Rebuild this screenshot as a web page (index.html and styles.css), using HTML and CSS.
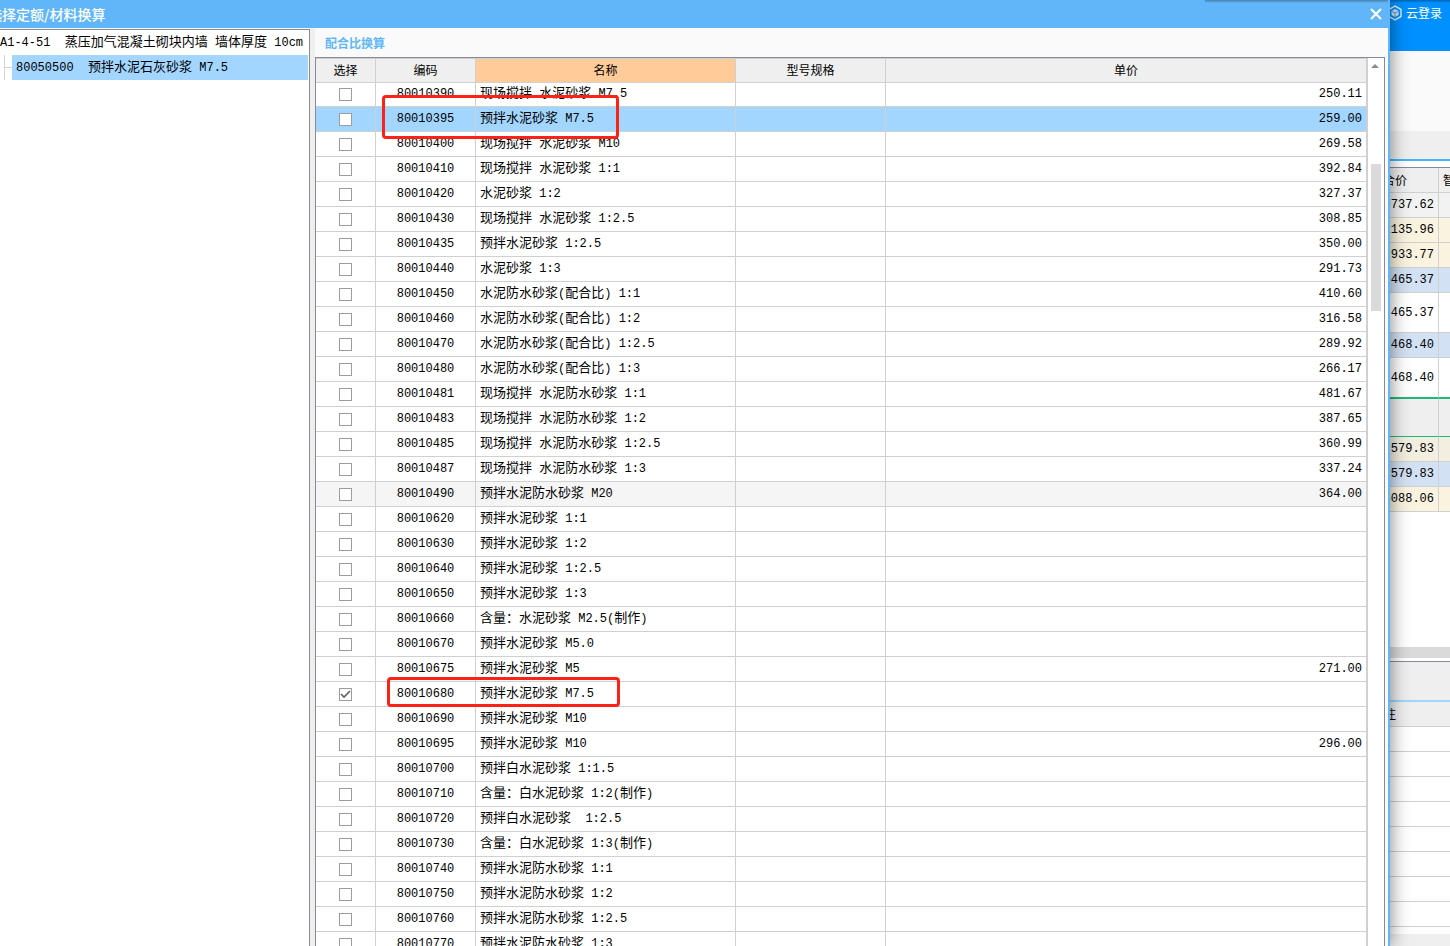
FILE: index.html
```html
<!DOCTYPE html>
<html lang="zh-CN">
<head>
<meta charset="utf-8">
<title>选择定额/材料换算</title>
<link rel="stylesheet" href="styles.css">
</head>
<body>
<div class="screen">
  <section class="dialog">
    <header class="titlebar">
      <h1 class="title">选择定额/材料换算</h1>
      <button class="close" type="button" aria-label="关闭"><svg width="12" height="12" viewBox="0 0 12 12"><path d="M1 1L11 11M11 1L1 11" stroke="#fff" stroke-width="2" fill="none"/></svg></button>
    </header>
    <div class="content">
      <nav class="tree">
        <a class="node" href="#q"><span>A1-4-51&nbsp; </span><span class="zh">蒸压加气混凝土砌块内墙</span> <span class="zh">墙体厚度</span><span> 10cm</span></a>
        <div class="branch"><a class="node selected" href="#m"><span>80050500&nbsp; </span><span class="zh">预拌水泥石灰砂浆</span><span> M7.5</span></a></div>
      </nav>
      <div class="panel">
        <h2 class="tab">配合比换算</h2>
        <div class="grid">
          <div class="rows">
            <table class="mix">
              <colgroup><col class="c-pick"><col class="c-code"><col class="c-name"><col class="c-spec"><col></colgroup>
              <thead><tr><th>选择</th><th>编码</th><th class="sorted">名称</th><th>型号规格</th><th>单价</th></tr></thead>
              <tbody>
                <tr><td><input type="checkbox" aria-label="80010390"></td><td>80010390</td><td><b>现场搅拌</b> <b>水泥砂浆</b> M7.5</td><td></td><td>250.11</td></tr>
                <tr class="current"><td><input type="checkbox" aria-label="80010395"></td><td>80010395</td><td><b>预拌水泥砂浆</b> M7.5</td><td></td><td>259.00</td></tr>
                <tr><td><input type="checkbox" aria-label="80010400"></td><td>80010400</td><td><b>现场搅拌</b> <b>水泥砂浆</b> M10</td><td></td><td>269.58</td></tr>
                <tr><td><input type="checkbox" aria-label="80010410"></td><td>80010410</td><td><b>现场搅拌</b> <b>水泥砂浆</b> 1:1</td><td></td><td>392.84</td></tr>
                <tr><td><input type="checkbox" aria-label="80010420"></td><td>80010420</td><td><b>水泥砂浆</b> 1:2</td><td></td><td>327.37</td></tr>
                <tr><td><input type="checkbox" aria-label="80010430"></td><td>80010430</td><td><b>现场搅拌</b> <b>水泥砂浆</b> 1:2.5</td><td></td><td>308.85</td></tr>
                <tr><td><input type="checkbox" aria-label="80010435"></td><td>80010435</td><td><b>预拌水泥砂浆</b> 1:2.5</td><td></td><td>350.00</td></tr>
                <tr><td><input type="checkbox" aria-label="80010440"></td><td>80010440</td><td><b>水泥砂浆</b> 1:3</td><td></td><td>291.73</td></tr>
                <tr><td><input type="checkbox" aria-label="80010450"></td><td>80010450</td><td><b>水泥防水砂浆</b>(<b>配合比</b>) 1:1</td><td></td><td>410.60</td></tr>
                <tr><td><input type="checkbox" aria-label="80010460"></td><td>80010460</td><td><b>水泥防水砂浆</b>(<b>配合比</b>) 1:2</td><td></td><td>316.58</td></tr>
                <tr><td><input type="checkbox" aria-label="80010470"></td><td>80010470</td><td><b>水泥防水砂浆</b>(<b>配合比</b>) 1:2.5</td><td></td><td>289.92</td></tr>
                <tr><td><input type="checkbox" aria-label="80010480"></td><td>80010480</td><td><b>水泥防水砂浆</b>(<b>配合比</b>) 1:3</td><td></td><td>266.17</td></tr>
                <tr><td><input type="checkbox" aria-label="80010481"></td><td>80010481</td><td><b>现场搅拌</b> <b>水泥防水砂浆</b> 1:1</td><td></td><td>481.67</td></tr>
                <tr><td><input type="checkbox" aria-label="80010483"></td><td>80010483</td><td><b>现场搅拌</b> <b>水泥防水砂浆</b> 1:2</td><td></td><td>387.65</td></tr>
                <tr><td><input type="checkbox" aria-label="80010485"></td><td>80010485</td><td><b>现场搅拌</b> <b>水泥防水砂浆</b> 1:2.5</td><td></td><td>360.99</td></tr>
                <tr><td><input type="checkbox" aria-label="80010487"></td><td>80010487</td><td><b>现场搅拌</b> <b>水泥防水砂浆</b> 1:3</td><td></td><td>337.24</td></tr>
                <tr class="hover"><td><input type="checkbox" aria-label="80010490"></td><td>80010490</td><td><b>预拌水泥防水砂浆</b> M20</td><td></td><td>364.00</td></tr>
                <tr><td><input type="checkbox" aria-label="80010620"></td><td>80010620</td><td><b>预拌水泥砂浆</b> 1:1</td><td></td><td></td></tr>
                <tr><td><input type="checkbox" aria-label="80010630"></td><td>80010630</td><td><b>预拌水泥砂浆</b> 1:2</td><td></td><td></td></tr>
                <tr><td><input type="checkbox" aria-label="80010640"></td><td>80010640</td><td><b>预拌水泥砂浆</b> 1:2.5</td><td></td><td></td></tr>
                <tr><td><input type="checkbox" aria-label="80010650"></td><td>80010650</td><td><b>预拌水泥砂浆</b> 1:3</td><td></td><td></td></tr>
                <tr><td><input type="checkbox" aria-label="80010660"></td><td>80010660</td><td><b>含量：水泥砂浆</b> M2.5(<b>制作</b>)</td><td></td><td></td></tr>
                <tr><td><input type="checkbox" aria-label="80010670"></td><td>80010670</td><td><b>预拌水泥砂浆</b> M5.0</td><td></td><td></td></tr>
                <tr><td><input type="checkbox" aria-label="80010675"></td><td>80010675</td><td><b>预拌水泥砂浆</b> M5</td><td></td><td>271.00</td></tr>
                <tr><td><input type="checkbox" checked aria-label="80010680"></td><td>80010680</td><td><b>预拌水泥砂浆</b> M7.5</td><td></td><td></td></tr>
                <tr><td><input type="checkbox" aria-label="80010690"></td><td>80010690</td><td><b>预拌水泥砂浆</b> M10</td><td></td><td></td></tr>
                <tr><td><input type="checkbox" aria-label="80010695"></td><td>80010695</td><td><b>预拌水泥砂浆</b> M10</td><td></td><td>296.00</td></tr>
                <tr><td><input type="checkbox" aria-label="80010700"></td><td>80010700</td><td><b>预拌白水泥砂浆</b> 1:1.5</td><td></td><td></td></tr>
                <tr><td><input type="checkbox" aria-label="80010710"></td><td>80010710</td><td><b>含量：白水泥砂浆</b> 1:2(<b>制作</b>)</td><td></td><td></td></tr>
                <tr><td><input type="checkbox" aria-label="80010720"></td><td>80010720</td><td><b>预拌白水泥砂浆</b>&nbsp; 1:2.5</td><td></td><td></td></tr>
                <tr><td><input type="checkbox" aria-label="80010730"></td><td>80010730</td><td><b>含量：白水泥砂浆</b> 1:3(<b>制作</b>)</td><td></td><td></td></tr>
                <tr><td><input type="checkbox" aria-label="80010740"></td><td>80010740</td><td><b>预拌水泥防水砂浆</b> 1:1</td><td></td><td></td></tr>
                <tr><td><input type="checkbox" aria-label="80010750"></td><td>80010750</td><td><b>预拌水泥防水砂浆</b> 1:2</td><td></td><td></td></tr>
                <tr><td><input type="checkbox" aria-label="80010760"></td><td>80010760</td><td><b>预拌水泥防水砂浆</b> 1:2.5</td><td></td><td></td></tr>
                <tr><td><input type="checkbox" aria-label="80010770"></td><td>80010770</td><td><b>预拌水泥防水砂浆</b> 1:3</td><td></td><td></td></tr>
              </tbody>
            </table>
          </div>
          <div class="scrollbar"><svg width="8" height="4" viewBox="0 0 8 4"><path d="M0 4L4 0L8 4Z" fill="#8c8c8c"/></svg><div class="thumb"></div></div>
          <div class="mark mark-first"></div>
          <div class="mark mark-second"></div>
        </div>
      </div>
    </div>
  </section>
  <aside class="behind">
    <header class="appbar"><svg width="14" height="16" viewBox="0 0 14 16"><path d="M7 1L13 4.500V11.500L7 15L1 11.500V4.500Z" fill="none" stroke="#d8e8f5" stroke-width="1.500"/><path d="M7 4L10.500 6V10L7 12L3.500 10V6Z" fill="#d8e8f5"/><path d="M4 6.500L7 8L10 6.500M7 8V12" fill="none" stroke="#4a9be0"/></svg><a class="login" href="#login">云登录</a></header>
    <div class="ribbon"></div>
    <div class="toolbar"></div>
    <table class="totals">
      <colgroup><col><col class="c-edge"></colgroup>
      <thead><tr><th><span>合价</span></th><th><span>智</span></th></tr></thead>
      <tbody>
        <tr class="plain"><td><span>9737.62</span></td><td></td></tr>
        <tr class="cream"><td><span>2135.96</span></td><td></td></tr>
        <tr class="cream"><td><span>933.77</span></td><td></td></tr>
        <tr class="blue"><td><span>465.37</span></td><td></td></tr>
        <tr class="tall"><td><span>465.37</span></td><td></td></tr>
        <tr class="blue"><td><span>468.40</span></td><td></td></tr>
        <tr class="tall above-active"><td><span>468.40</span></td><td></td></tr>
        <tr class="active"><td></td><td></td></tr>
        <tr class="sand"><td><span>579.83</span></td><td></td></tr>
        <tr class="blue"><td><span>579.83</span></td><td></td></tr>
        <tr class="cream"><td><span>6088.06</span></td><td></td></tr>
      </tbody>
    </table>
    <div class="blank"></div>
    <div class="splitter"></div>
    <div class="subbar"></div>
    <div class="detail">
      <div class="detail-head">注</div>
      <div class="line"></div><div class="line"></div><div class="line"></div><div class="line"></div><div class="line"></div><div class="line"></div><div class="line"></div><div class="line"></div>
    </div>
    <div class="status"></div>
  </aside>
</div>
</body>
</html>
```
FILE: styles.css
```css
* { box-sizing: border-box; }
body {
  margin: 0;
  background: #fff;
  color: #000;
  font: 12px/24px "Liberation Mono", "Noto Sans CJK SC", monospace;
}
.screen { display: flex; height: 100vh; overflow: hidden; }
h1, h2 { margin: 0; font-weight: 400; }
a { color: inherit; text-decoration: none; }
b, .zh { font-size: 13px; font-weight: 400; }

.dialog {
  flex: 1;
  min-width: 0;
  display: flex;
  flex-direction: column;
  position: relative;
  z-index: 1;
  border-right: 2px solid #60b6f9;
  background: #fafafa;
  box-shadow: 0 0 18px rgba(0, 0, 0, .5);
}
.titlebar {
  display: flex;
  justify-content: space-between;
  align-items: center;
  height: 28px;
  flex: none;
  padding-right: 6px;
  background: linear-gradient(rgba(0, 0, 0, .3), transparent) right top / 183px 3px no-repeat #60b6f9;
  color: #fff;
}
.title {
  margin-left: -12px;
  font: 500 14px/28px "Noto Sans CJK SC", sans-serif;
}
.close { display: flex; padding: 0; border: 0; background: none; }
.content { display: flex; flex: 1; min-height: 0; }

.tree {
  width: 310px;
  flex: none;
  margin-top: 1px;
  border: solid #858a96;
  border-width: 1px 1px 0 0;
  background: #fff;
}
.node { display: block; height: 25px; line-height: 25px; white-space: nowrap; }
.branch {
  margin-left: 4px;
  padding-left: 7px;
  border-left: 1px solid #d4d4d4;
  background: linear-gradient(#d4d4d4, #d4d4d4) 0 12px / 7px 1px no-repeat;
}
.selected { margin-right: 1px; padding-left: 4px; background: #a3d6ff; }

.panel {
  flex: 1;
  min-width: 0;
  display: flex;
  flex-direction: column;
  padding-right: 3px;
  border-left: 5px solid #efefef;
}
.tab {
  height: 29px;
  padding-left: 10px;
  color: #60b6f9;
  font: 700 12px/30px "Noto Sans CJK SC", sans-serif;
}
.grid {
  display: flex;
  flex: 1;
  min-height: 0;
  position: relative;
  border: solid #858a96;
  border-width: 1px 1px 0 1px;
  background: #fff;
}
.rows { flex: 1; min-width: 0; overflow: hidden; }
.mix, .totals { width: 100%; table-layout: fixed; border-collapse: separate; border-spacing: 0; }
.c-pick { width: 60px; }
.c-code { width: 100px; }
.c-name { width: 260px; }
.c-spec { width: 150px; }
.mix th {
  height: 24px;
  padding: 0 0 2px;
  border-top: 1px solid #d0d0d0;
  border-right: 1px solid #d0d0d0;
  background: #efefef;
  box-shadow: 0 1px #d0d0d0;
  font: 400 12px/21px "Noto Sans CJK SC", sans-serif;
}
.mix .sorted { background: #ffcb99; }
.mix td {
  height: 25px;
  padding: 0 4px;
  border: solid #d0d0d0;
  border-width: 0 1px 1px 0;
  line-height: 24px;
  white-space: nowrap;
}
.mix td:nth-child(-n+2) { text-align: center; }
.mix td:last-child { text-align: right; }
.mix .current { background: #a3d6ff; }
.mix .hover { background: #f5f5f5; }
.mix input {
  appearance: none;
  display: block;
  width: 13px;
  height: 13px;
  margin: 0 auto;
  border: 1px solid #9c9c9c;
  background: #fff;
}
.mix input:checked {
  background: #fff url("data:image/svg+xml,%3Csvg xmlns='http://www.w3.org/2000/svg' viewBox='0 0 11 11'%3E%3Cpath d='M1 5L4 8L10 2' fill='none' stroke='%23606060' stroke-width='1.6'/%3E%3C/svg%3E") center / 11px 11px no-repeat;
}
.scrollbar {
  width: 17px;
  flex: none;
  padding: 6px 3px 0;
  border-left: 1px solid #d0d0d0;
  background: #fff;
}
.scrollbar svg { display: block; }
.thumb { width: 10px; height: 147px; margin-top: 96px; background: #dadada; }
.mark { position: absolute; border: 3px solid #fb2318; border-radius: 4px; }
.mark-first { left: 66px; top: 37px; width: 237px; height: 44px; }
.mark-second { left: 71px; top: 619px; width: 233px; height: 30px; }

.behind {
  width: 60px;
  flex: none;
  display: flex;
  flex-direction: column;
  overflow: hidden;
}
.appbar {
  display: flex;
  align-items: flex-start;
  justify-content: flex-end;
  gap: 4px;
  height: 51px;
  flex: none;
  padding: 5px 8px 0 0;
  background: linear-gradient(rgba(0, 0, 0, .3), transparent) right top / 100% 3px no-repeat #0090ff;
  color: #fff;
}
.appbar svg { flex: none; }
.login { flex: none; font: 12px/16px "Noto Sans CJK SC", sans-serif; }
.ribbon { height: 80px; flex: none; background: #fafafa; }
.toolbar { height: 30px; flex: none; border-bottom: 2px solid #45b4fb; background: #efefef; }
.totals { margin-top: 6px; border-top: 1px solid #858a96; }
.c-edge { width: 11px; }
.totals th, .totals td {
  height: 25px;
  padding: 0;
  overflow: hidden;
  border: solid #d0d0d0;
  border-width: 0 1px 1px 0;
  line-height: 24px;
  white-space: nowrap;
}
.totals th:last-child, .totals td:last-child { border-right: 0; }
.totals span { display: flex; justify-content: flex-end; padding-right: 4px; }
.totals th { background: #efefef; font: 400 12px/24px "Noto Sans CJK SC", sans-serif; }
.totals th span { padding-right: 31px; }
.totals th:last-child span { justify-content: flex-start; padding: 0 0 0 4px; }
.plain { background: #f2f2f2; }
.cream { background: #faf3e0; }
.blue { background: #d2e1f3; }
.sand { background: #f2eee0; }
.totals .tall td { height: 40px; }
.totals .above-active td { border-bottom-color: #20b87a; }
.totals .active td {
  height: 39px;
  border-top: 1px solid #20b87a;
  border-bottom-color: #20b87a;
  background: #efefef;
}
.blank { flex: 1; }
.splitter { height: 11px; flex: none; background: #dadada; }
.subbar {
  height: 41px;
  flex: none;
  margin-top: 3px;
  border-top: 1px solid #858a96;
  border-bottom: 2px solid #9fd5ff;
  background: #efefef;
}
.detail-head {
  height: 25px;
  border-bottom: 1px solid #d0d0d0;
  background: #efefef;
  font: 12px/24px "Noto Sans CJK SC", sans-serif;
  text-indent: -6px;
}
.line { height: 25px; border-bottom: 1px solid #d0d0d0; }
.status { height: 12px; flex: none; margin-top: 7px; background: #efefef; }
```
